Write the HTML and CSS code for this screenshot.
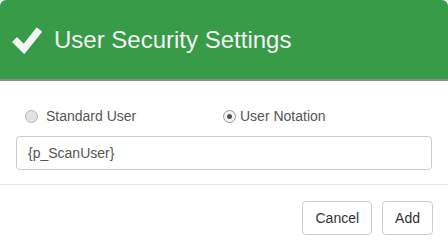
FILE: index.html
```html
<!DOCTYPE html>
<html>
<head>
<meta charset="utf-8">
<link rel="stylesheet" href="styles.css">
</head>
<body>
<div class="modal">
  <div class="modal-header">
    <svg class="check" width="32" height="28" viewBox="0 0 32 28"><polyline points="3.5,13.5 13,23 28.5,3.5" fill="none" stroke="#f4f4f4" stroke-width="7"/></svg>
    <h1 class="title">User Security Settings</h1>
  </div>
  <div class="modal-body">
    <div class="radios">
      <label class="radio radio-a"><span class="dot"></span>Standard User</label>
      <label class="radio radio-b"><span class="dot checked"></span>User Notation</label>
    </div>
    <div class="field">{p_ScanUser}</div>
  </div>
  <div class="modal-footer">
    <button class="btn">Cancel</button>
    <button class="btn">Add</button>
  </div>
</div>
</body>
</html>
```
FILE: styles.css
```css
html, body {
  margin: 0;
  padding: 0;
  background: #fff;
}
body {
  font-family: "Liberation Sans", Arial, sans-serif;
  width: 448px;
  height: 250px;
  overflow: hidden;
}
.modal {
  width: 448px;
}
.modal-header {
  height: 79px;
  background: #389b47;
  border-bottom: 2px solid #8c8c8c;
  border-radius: 6px 6px 0 0;
  display: flex;
  align-items: center;
  padding-left: 11px;
  box-sizing: content-box;
}
.check {
  display: block;
  margin-top: 0;
}
.title {
  margin: 0 0 0 11px;
  font-size: 24px;
  font-weight: normal;
  color: #f3f3f3;
  line-height: 28px;
}
.modal-body {
  padding: 25px 16px 14px 16px;
  border-bottom: 1px solid #e5e5e5;
}
.radios {
  display: flex;
  height: 20px;
  align-items: center;
  margin-bottom: 10px;
  font-size: 14px;
  color: #555;
}
.radio {
  display: flex;
  align-items: center;
  line-height: 20px;
}
.radio-a {
  margin-left: 9px;
  width: 198px;
}
.dot {
  width: 11px;
  height: 11px;
  border-radius: 50%;
  border: 1px solid #b4b4b4;
  background: #e2e2e2;
  margin-right: 8px;
  display: flex;
  align-items: center;
  justify-content: center;
}
.dot.checked {
  background: #f4f4f4;
  border-color: #9a9a9a;
  margin-right: 4px;
}
.dot.checked::after {
  content: "";
  width: 5px;
  height: 5px;
  border-radius: 50%;
  background: #555;
}
.field {
  height: 32px;
  border: 1px solid #ccc;
  border-radius: 4px;
  padding: 0 11px;
  font-size: 14px;
  line-height: 32px;
  color: #555;
}
.modal-footer {
  display: flex;
  justify-content: flex-end;
  gap: 10px;
  padding: 16px 15px 0 0;
}
.btn {
  height: 34px;
  padding: 0 12px;
  font-family: "Liberation Sans", Arial, sans-serif;
  font-size: 14px;
  color: #333;
  background: #fff;
  border: 1px solid #ccc;
  border-radius: 4px;
}
```
